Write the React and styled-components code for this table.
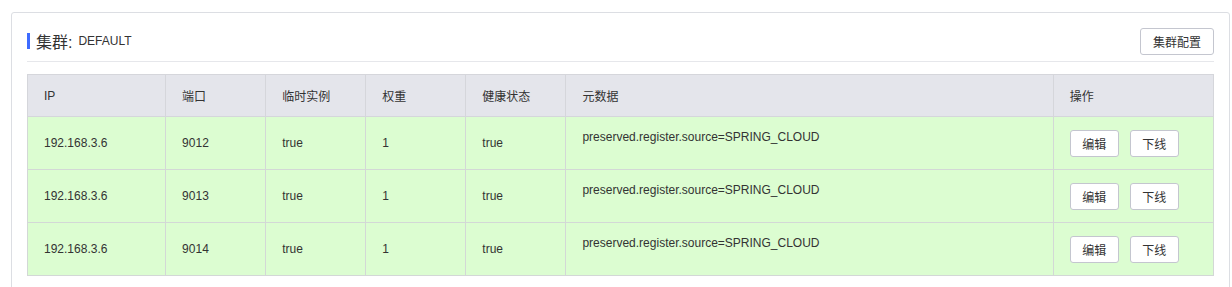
import React from "react";
import styled, { createGlobalStyle } from "styled-components";

const GlobalStyle = createGlobalStyle`
  body {
    margin: 0;
    background: #fff;
    font-family: "Liberation Sans", "Noto Sans CJK SC", sans-serif;
    color: #333;
  }
`;

const rows = [
  { ip: "192.168.3.6", port: "9012", ephemeral: "true", weight: "1", healthy: "true" },
  { ip: "192.168.3.6", port: "9013", ephemeral: "true", weight: "1", healthy: "true" },
  { ip: "192.168.3.6", port: "9014", ephemeral: "true", weight: "1", healthy: "true" },
];

const columns = [
  { title: "IP", width: 138 },
  { title: "端口", width: 100 },
  { title: "临时实例", width: 100 },
  { title: "权重", width: 100 },
  { title: "健康状态", width: 100 },
  { title: "元数据", width: 487 },
  { title: "操作", width: 160 },
];

export default function App() {
  return (
    <>
      <GlobalStyle />
      <Card>
        <CardHeader>
          <Title>
            <Mark />
            <span>集群:</span>
            <ClusterName>DEFAULT</ClusterName>
          </Title>
          <Button $w={74}>集群配置</Button>
        </CardHeader>
        <Table>
          <colgroup>
            {columns.map((c) => (
              <col key={c.title} style={{ width: c.width }} />
            ))}
          </colgroup>
          <thead>
            <Row $h={42}>
              {columns.map((c) => (
                <Th key={c.title}>{c.title}</Th>
              ))}
            </Row>
          </thead>
          <tbody>
            {rows.map((r) => (
              <Row $h={53} key={r.port}>
                <Td>{r.ip}</Td>
                <Td>{r.port}</Td>
                <Td>{r.ephemeral}</Td>
                <Td>{r.weight}</Td>
                <Td>{r.healthy}</Td>
                <Td $top>preserved.register.source=SPRING_CLOUD</Td>
                <Td>
                  <Actions>
                    <Button $w={49}>编辑</Button>
                    <Button $w={49}>下线</Button>
                  </Actions>
                </Td>
              </Row>
            ))}
          </tbody>
        </Table>
      </Card>
    </>
  );
}

const Card = styled.div`
  margin: 12px 2px 0 11px;
  padding: 15px 15px 20px;
  border: 1px solid #dcdee3;
  border-radius: 3px;
  background: #fff;
`;

const CardHeader = styled.div`
  display: flex;
  align-items: center;
  justify-content: space-between;
  padding-bottom: 6px;
  border-bottom: 1px solid #e6e7eb;
`;

const Title = styled.div`
  display: flex;
  align-items: center;
  font-size: 16px;
  color: #333;
  margin-top: -2px;
`;

const Mark = styled.i`
  display: inline-block;
  width: 3px;
  height: 16px;
  background: #3e6bff;
  margin-right: 6px;
`;

const ClusterName = styled.span`
  font-size: 12px;
  margin-left: 6px;
  color: #333;
`;

const Button = styled.button`
  box-sizing: border-box;
  width: ${(p) => p.$w}px;
  height: 27px;
  padding: 0;
  border: 1px solid #c4c6cf;
  border-radius: 3px;
  background: #fff;
  color: #333;
  font-family: "Liberation Sans", "Noto Sans CJK SC", sans-serif;
  font-size: 12px;
  cursor: pointer;
`;

const Table = styled.table`
  margin-top: 12px;
  width: 100%;
  table-layout: fixed;
  border-collapse: collapse;
  font-size: 12px;
`;

const Row = styled.tr`
  height: ${(p) => p.$h}px;
`;

const Th = styled.th`
  padding: 0 16px;
  text-align: left;
  font-weight: normal;
  color: #333;
  background: #e4e5eb;
  border: 1px solid #d5d6db;
`;

const Td = styled.td`
  padding: ${(p) => (p.$top ? "13px 16px 0" : "0 16px")};
  vertical-align: ${(p) => (p.$top ? "top" : "middle")};
  background: #dcfdd1;
  border: 1px solid #d3d8d6;
  color: #333;
  line-height: 14px;
`;

const Actions = styled.div`
  display: flex;
  gap: 11px;
`;
